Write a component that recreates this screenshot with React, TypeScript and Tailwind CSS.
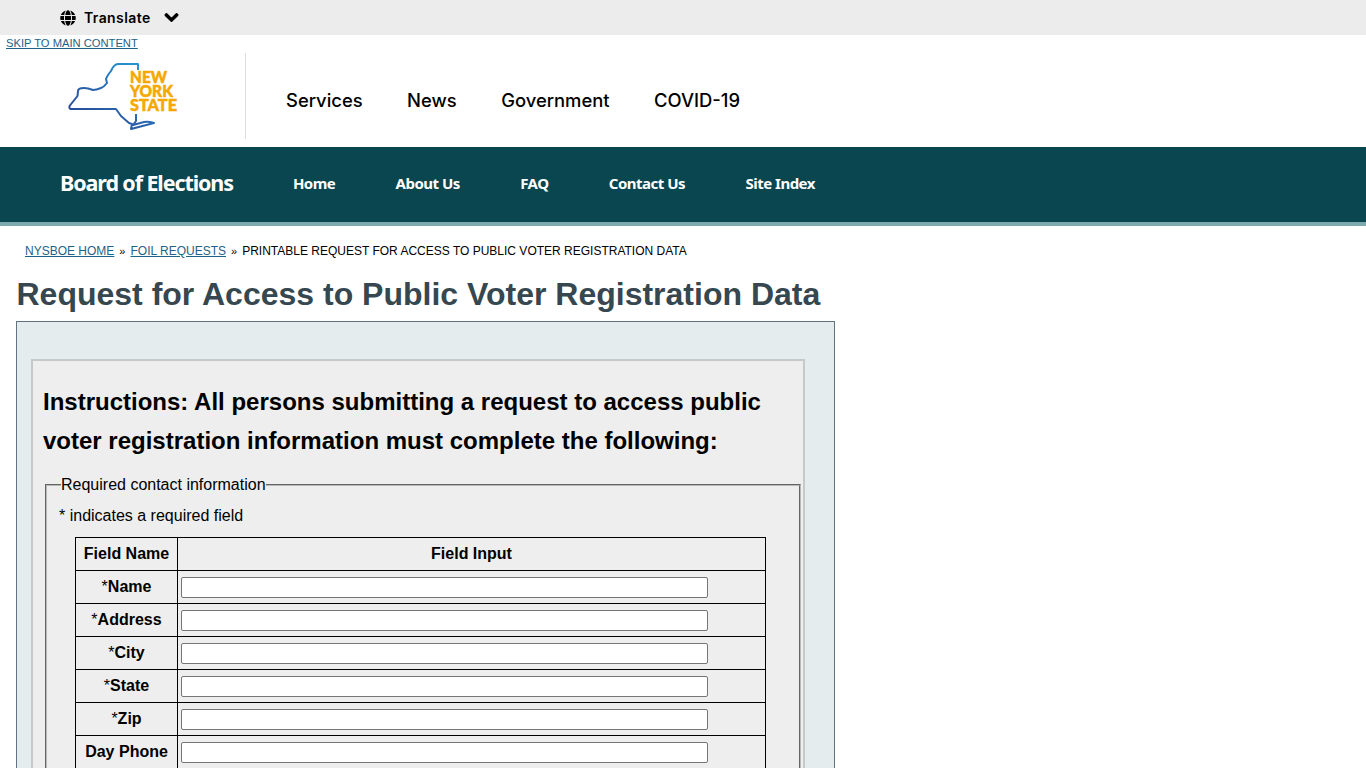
import { FaChevronDown, FaGlobe } from "react-icons/fa";

const sans = "font-['Liberation_Sans',Arial,sans-serif]";

const topLinks = ["Services", "News", "Government", "COVID-19"];
const agencyLinks = ["Home", "About Us", "FAQ", "Contact Us", "Site Index"];
const fields = ["*Name", "*Address", "*City", "*State", "*Zip", "Day Phone"];

function Logo() {
  return (
    <svg width="120" height="72" viewBox="0 0 120 72" className="block" aria-label="New York State">
      <defs>
        <linearGradient id="nys" x1="1" y1="0" x2="0" y2="1">
          <stop offset="0" stopColor="#22a0dc" />
          <stop offset="0.55" stopColor="#2a62ac" />
          <stop offset="1" stopColor="#27408f" />
        </linearGradient>
      </defs>
      <path
        d="M78 7 V1 H58 Q54 1 51 8 Q47 13 46 16 L47 20 Q44 24 41 25 Q36 27 33 27 Q28 25 24 25 Q18 25 18 28 L17.500 33 L9.500 43 Q9 46 11 46 H56 L61 53 L69 60 L72 61 L71 66 L94 60 Q88 58 84 59 L73 62 L76 58 V51"
        fill="none"
        stroke="url(#nys)"
        strokeWidth="2"
        strokeLinejoin="round"
      />
      <g fill="#f5a800" stroke="#f5a800" strokeWidth="0.5" fontFamily="Lato, sans-serif" fontWeight="900" fontSize="16.500">
        <text x="70" y="20" textLength="37" lengthAdjust="spacingAndGlyphs">NEW</text>
        <text x="70" y="34" textLength="43" lengthAdjust="spacingAndGlyphs">YORK</text>
        <text x="70" y="48" textLength="47" lengthAdjust="spacingAndGlyphs">STATE</text>
      </g>
    </svg>
  );
}

export default function App() {
  return (
    <div className={`h-screen overflow-hidden bg-white text-black ${sans}`}>
      {/* translate bar */}
      <div className="h-[35px] bg-[#ececec] flex items-center pl-[60px] font-['Inter',sans-serif] font-semibold text-[14px] tracking-[0.4px]">
        <FaGlobe className="text-[16px]" />
        <span className="ml-[8px]">Translate</span>
        <FaChevronDown className="ml-[13px] text-[15px]" strokeWidth={40} />
      </div>

      {/* state header */}
      <div className="h-[112px] relative">
        <a href="#main" className="absolute left-[6px] top-[2px] text-[11.2px] leading-[13px] text-[#1f6287] underline">
          SKIP TO MAIN CONTENT
        </a>
        <div className="flex items-center pt-[18px]">
          <div className="w-[246px] h-[86px] border-r border-[#dcdcdc] pl-[60px] pt-[10px]">
            <Logo />
          </div>
          <nav className="flex gap-[44.500px] pl-[40px] mt-[10px] font-['Inter',sans-serif] font-medium text-[18.400px] text-black">
            {topLinks.map((l) => (
              <a key={l} href="#">{l}</a>
            ))}
          </nav>
        </div>
      </div>

      {/* agency nav */}
      <div className="h-[79px] bg-[#0a464f] border-b-4 border-[#7eaaae] flex items-center pl-[60px] pb-[2px] text-white font-['Noto_Sans',sans-serif] font-bold">
        <span className="text-[21.500px] tracking-[-1.1px]">Board of Elections</span>
        <nav className="flex gap-[60.300px] ml-[60px] -mt-[1px] text-[15px] tracking-[-0.5px]">
          {agencyLinks.map((l) => (
            <a key={l} href="#">{l}</a>
          ))}
        </nav>
      </div>

      {/* breadcrumb */}
      <div className="pl-[25px] pt-[18px] text-[12px] leading-[14px] flex items-center">
        <a href="#" className="text-[#1f6287] underline">NYSBOE HOME</a>
        <span className="mx-[5px] text-[11px]">»</span>
        <a href="#" className="text-[#1f6287] underline">FOIL REQUESTS</a>
        <span className="mx-[5px] text-[11px]">»</span>
        <span>PRINTABLE REQUEST FOR ACCESS TO PUBLIC VOTER REGISTRATION DATA</span>
      </div>

      <h1 id="main" className="ml-[16.500px] mt-[17px] text-[32px] leading-[38px] font-bold text-[#36474f]">
        Request for Access to Public Voter Registration Data
      </h1>

      {/* form panel */}
      <div className="ml-[16px] mt-[8px] w-[819px] border border-[#5f7480] bg-[#e4ecee] pt-[37px] pl-[14px]">
        <div className="w-[774px] border-2 border-[#c6c9c9] bg-[#eeeeee] pl-[10px] pt-[21px]">
          <h2 className="text-[24px] leading-[39px] font-bold">
            Instructions: All persons submitting a request to access public voter registration information must complete the following:
          </h2>
          <fieldset className="mt-[16px] ml-[2px] w-[756px] border-2 [border-style:groove] border-[#b8b8b8] pl-[12px] pb-[10px]">
            <legend className="text-[16px] leading-[18px] ml-[2px] px-0">Required contact information</legend>
            <p className="text-[16px] leading-[18px] mt-[13px]">* indicates a required field</p>
            <table className="mt-[12px] ml-[16px] w-[691px] border-collapse text-[16px] table-fixed">
              <thead>
                <tr className="h-[33px]">
                  <th className="w-[102px] border border-black font-bold">Field Name</th>
                  <th className="border border-black font-bold">Field Input</th>
                </tr>
              </thead>
              <tbody>
                {fields.map((f) => (
                  <tr key={f} className="h-[33px]">
                    <th className="border border-black font-bold">
                      {f.startsWith("*") ? (
                        <>
                          <span className="font-normal">*</span>
                          {f.slice(1)}
                        </>
                      ) : (
                        f
                      )}
                    </th>
                    <td className="border border-black pl-[3px]">
                      <input
                        type="text"
                        aria-label={f}
                        className="block w-[527px] h-[21px] bg-white border border-[#767676] rounded-[2px]"
                      />
                    </td>
                  </tr>
                ))}
              </tbody>
            </table>
          </fieldset>
        </div>
      </div>
    </div>
  );
}
